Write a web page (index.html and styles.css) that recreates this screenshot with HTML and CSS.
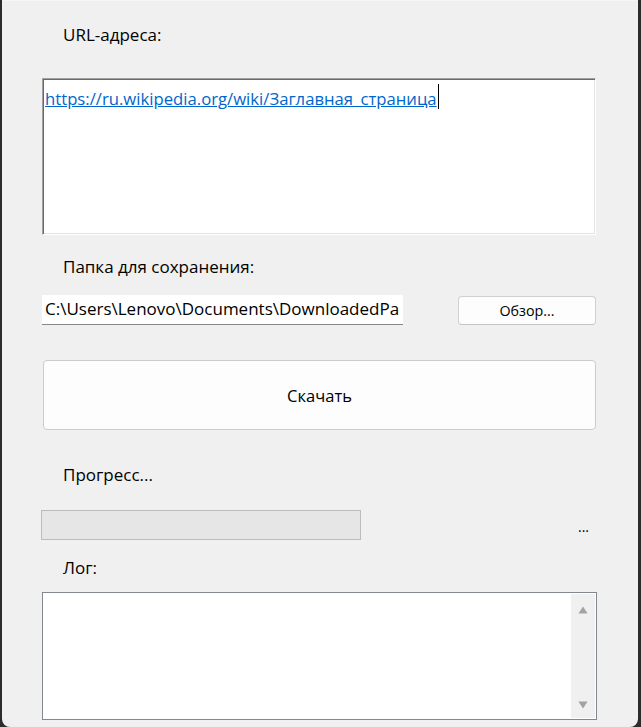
FILE: index.html
```html
<!DOCTYPE html>
<html lang="ru">
<head>
<meta charset="utf-8">
<title>Загрузчик страниц</title>
<link rel="stylesheet" href="styles.css">
</head>
<body>
<div class="window">
  <div class="lbl lbl-url">URL-адреса:</div>
  <div class="urlbox"><span class="link">https://ru.wikipedia.org/wiki/Заглавная_страница</span><span class="caret"></span></div>
  <div class="lbl lbl-folder">Папка для сохранения:</div>
  <div class="row path-row">
    <div class="pathbox">C:\Users\Lenovo\Documents\DownloadedPa</div>
    <button class="btn browse">Обзор...</button>
  </div>
  <button class="btn download">Скачать</button>
  <div class="lbl lbl-progress">Прогресс...</div>
  <div class="row progress-row">
    <div class="progress"></div>
    <span class="dots">...</span>
  </div>
  <div class="lbl lbl-log">Лог:</div>
  <div class="log">
    <div class="log-body"></div>
    <div class="scrollbar">
      <svg class="arrow" width="10" height="8" viewBox="0 0 10 8"><path d="M5 0.5 L9.6 7.5 L0.4 7.5 Z" fill="#a3a3a3"/></svg>
      <svg class="arrow" width="10" height="8" viewBox="0 0 10 8"><path d="M0.4 0.5 L9.6 0.5 L5 7.5 Z" fill="#a3a3a3"/></svg>
    </div>
  </div>
</div>
</body>
</html>
```

FILE: styles.css
```css
html, body {
  margin: 0;
  padding: 0;
}

body {
  background: #2c2c2c;
  width: 641px;
  height: 727px;
  overflow: hidden;
  font-family: "Open Sans", "Noto Sans", sans-serif;
  font-size: 17px;
  color: #000;
}

.window {
  margin-left: 2px;
  width: 636px;
  height: 727px;
  box-sizing: border-box;
  background: #f0f0f0;
  border-top: 1px solid #f5f6f7;
  border-radius: 0 0 8px 8px;
  padding: 24px 0 0 40px;
  display: flex;
  flex-direction: column;
  align-items: flex-start;
}

.lbl {
  line-height: 20px;
  height: 20px;
  margin-left: 21px;
  white-space: nowrap;
}

.urlbox {
  margin-top: 33px;
  width: 554px;
  height: 157px;
  box-sizing: border-box;
  background: #fff;
  border: 1px solid;
  border-color: #a0a0a0 #ffffff #ffffff #a0a0a0;
  box-shadow: inset 1px 1px 0 #696969, inset -1px -1px 0 #e3e3e3;
  padding: 5px 0 0 2px;
  line-height: 20px;
  font-size: 16.7px;
  white-space: nowrap;
}

.link {
  color: #0066cc;
  text-decoration: underline;
}

.caret {
  display: inline-block;
  width: 1px;
  height: 25px;
  background: #000;
  vertical-align: -4px;
  margin-left: 1px;
}

.lbl-folder {
  margin-top: 22px;
}

.row {
  display: flex;
  align-items: center;
}

.path-row {
  margin-top: 18px;
  height: 30px;
}

.pathbox {
  width: 361px;
  height: 30px;
  box-sizing: border-box;
  background: #fff;
  border-bottom: 1px solid #868686;
  padding: 4px 0 0 3px;
  line-height: 20px;
  white-space: nowrap;
  overflow: hidden;
}

.btn {
  font-family: inherit;
  color: #000;
  background: #fdfdfd;
  border: 1px solid #d0d0d0;
  border-bottom-color: #c4c4c4;
  border-radius: 4px;
  padding: 0;
  margin: 0;
  box-sizing: border-box;
}

.browse {
  margin-left: 55px;
  width: 138px;
  height: 29px;
  font-size: 14.3px;
  line-height: 27px;
}

.download {
  margin-top: 35px;
  margin-left: 1px;
  width: 553px;
  height: 70px;
  font-size: 16.5px;
  border-color: #cccccc;
}

.lbl-progress {
  margin-top: 35px;
}

.progress-row {
  margin-top: 25px;
  margin-left: -1px;
  height: 30px;
  width: 556px;
}

.progress {
  width: 320px;
  height: 30px;
  box-sizing: border-box;
  background: #e6e6e6;
  border: 1px solid #bcbcbc;
}

.dots {
  margin-left: 217px;
  line-height: 20px;
  margin-top: 4px;
  font-size: 14px;
}

.lbl-log {
  margin-top: 18px;
}

.log {
  margin-top: 14px;
  width: 555px;
  height: 128px;
  box-sizing: border-box;
  background: #fff;
  border: 1px solid #828790;
  display: flex;
  padding: 1px 1px 1px 0;
}

.log-body {
  flex: 1;
}

.scrollbar {
  width: 24px;
  background: #f0f0f0;
  display: flex;
  flex-direction: column;
  align-items: center;
  justify-content: space-between;
  padding: 12px 0 9px;
  box-sizing: border-box;
}

.arrow {
  display: block;
}
```
